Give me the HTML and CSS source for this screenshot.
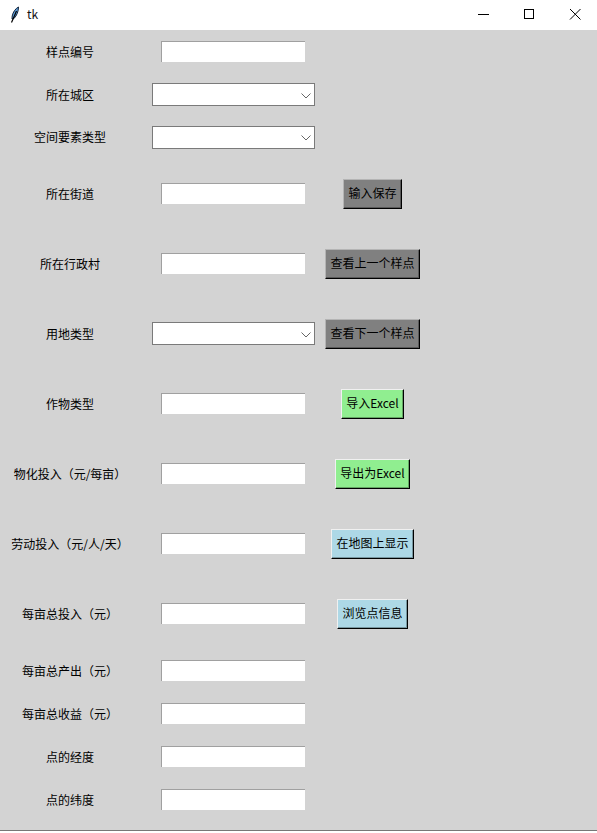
FILE: index.html

```html
<!DOCTYPE html>
<html lang="zh">
<head>
  <meta charset="UTF-8" />
  <title>tk</title>
  <link rel="stylesheet" href="styles.css">
</head>
<body>

<div class="titlebar">
  <svg class="app-icon" width="16" height="18" viewBox="0 0 16 18">
    <path d="M10.5 1 C7.5 2.5 5 6 4.2 10 L4 13 L6 12.5 C8.8 9.5 10.5 5.5 10.5 1 Z" fill="#5b9bd8" stroke="#12233a" stroke-width="1"/>
    <path d="M8.5 5 L3.5 16.5" fill="none" stroke="#000" stroke-width="1.2"/>
  </svg>
  <span class="app-title">tk</span>
  <div class="win-controls">
    <svg width="46" height="30" viewBox="0 0 46 30"><path d="M19 14.5 H30" stroke="#000" fill="none"/></svg>
    <svg width="46" height="30" viewBox="0 0 46 30"><rect x="19.5" y="9.5" width="9" height="9" stroke="#000" fill="none"/></svg>
    <svg width="46" height="30" viewBox="0 0 46 30"><path d="M19 9 L29.5 19.5 M29.5 9 L19 19.5" stroke="#000" fill="none"/></svg>
  </div>
</div>

<div class="form">
  <label class="lbl">样点编号</label>
  <div class="field"><input class="entry" type="text"></div>

  <label class="lbl">所在城区</label>
  <div class="field combo">
    <select class="combo-box"><option></option></select>
    <svg class="chevron" width="10" height="6" viewBox="0 0 10 6"><path d="M0.5 0.5 L5 5 L9.5 0.5" fill="none" stroke="#666"/></svg>
  </div>

  <label class="lbl">空间要素类型</label>
  <div class="field combo">
    <select class="combo-box"><option></option></select>
    <svg class="chevron" width="10" height="6" viewBox="0 0 10 6"><path d="M0.5 0.5 L5 5 L9.5 0.5" fill="none" stroke="#666"/></svg>
  </div>

  <label class="lbl">所在街道</label>
  <div class="field"><input class="entry" type="text"></div>
  <div class="action"><button class="btn btn-gray">输入保存</button></div>

  <label class="lbl">所在行政村</label>
  <div class="field"><input class="entry" type="text"></div>
  <div class="action"><button class="btn btn-gray">查看上一个样点</button></div>

  <label class="lbl">用地类型</label>
  <div class="field combo">
    <select class="combo-box"><option></option></select>
    <svg class="chevron" width="10" height="6" viewBox="0 0 10 6"><path d="M0.5 0.5 L5 5 L9.5 0.5" fill="none" stroke="#666"/></svg>
  </div>
  <div class="action"><button class="btn btn-gray">查看下一个样点</button></div>

  <label class="lbl">作物类型</label>
  <div class="field"><input class="entry" type="text"></div>
  <div class="action"><button class="btn btn-green">导入Excel</button></div>

  <label class="lbl">物化投入（元/每亩）</label>
  <div class="field"><input class="entry" type="text"></div>
  <div class="action"><button class="btn btn-green">导出为Excel</button></div>

  <label class="lbl">劳动投入（元/人/天）</label>
  <div class="field"><input class="entry" type="text"></div>
  <div class="action"><button class="btn btn-blue">在地图上显示</button></div>

  <label class="lbl">每亩总投入（元）</label>
  <div class="field"><input class="entry" type="text"></div>
  <div class="action"><button class="btn btn-blue">浏览点信息</button></div>

  <label class="lbl">每亩总产出（元）</label>
  <div class="field"><input class="entry" type="text"></div>

  <label class="lbl">每亩总收益（元）</label>
  <div class="field"><input class="entry" type="text"></div>

  <label class="lbl">点的经度</label>
  <div class="field"><input class="entry" type="text"></div>

  <label class="lbl">点的纬度</label>
  <div class="field"><input class="entry" type="text"></div>
</div>

</body>
</html>
```

FILE: styles.css

```css
html, body {
  margin: 0;
  height: 833px;
  overflow: hidden;
  background-color: #fff;
}
body {
  font-family: "Noto Sans CJK SC", "Noto Sans", sans-serif;
  font-size: 12px;
  color: #000;
}

.titlebar {
  display: flex;
  align-items: center;
  height: 30px;
  padding-left: 8px;
  background-color: #fff;
}
.app-icon { margin-right: 3px; }
.app-title { color: #111; margin-bottom: 3px; }
.win-controls {
  display: flex;
  margin-left: auto;
}

.form {
  display: grid;
  grid-template-columns: 140px 175px 115px;
  grid-template-rows: 43px 43px 42.5px repeat(6, 70px) 70.5px repeat(4, 43px);
  height: 791px;
  padding-bottom: 9px;
  background-color: #d3d3d3;
  border-bottom: 1px solid #777;
}
.lbl {
  grid-column: 1;
  align-self: center;
  text-align: center;
  white-space: nowrap;
  margin-bottom: 1px;
}
.field {
  grid-column: 2;
  display: flex;
  align-items: center;
  justify-content: flex-end;
}
.field .entry { margin-right: 10px; }
.action {
  grid-column: 3;
  display: flex;
  align-items: center;
  justify-content: center;
}

.entry {
  box-sizing: border-box;
  width: 144px;
  height: 21px;
  padding: 0 2px;
  background-color: #fff;
  border: none;
  border-top: 1px solid #a0a0a0;
  border-left: 1px solid #a0a0a0;
  outline: none;
}

.combo { position: relative; }
.combo-box {
  appearance: none;
  box-sizing: border-box;
  width: 163px;
  height: 23px;
  background-color: #fff;
  border: 1px solid #7a7a7a;
  border-radius: 0;
  outline: none;
}
.chevron {
  position: absolute;
  right: 4px;
  top: 50%;
  margin-top: -2px;
}

.btn {
  box-sizing: border-box;
  height: 30px;
  padding: 0 4.5px 2px;
  font: inherit;
  color: #000;
  white-space: nowrap;
  border: 1px solid;
  border-color: #f0f0f0 #000 #000 #f0f0f0;
  box-shadow: inset -1px -1px 0 rgba(0,0,0,0.3);
}
.btn-gray { background-color: #808080; border-color: #b4b4b4 #000 #000 #b4b4b4; }
.btn-green { background-color: #90ee90; padding: 0 4.7px 2px; }
.btn-blue { background-color: #add8e6; }
```
